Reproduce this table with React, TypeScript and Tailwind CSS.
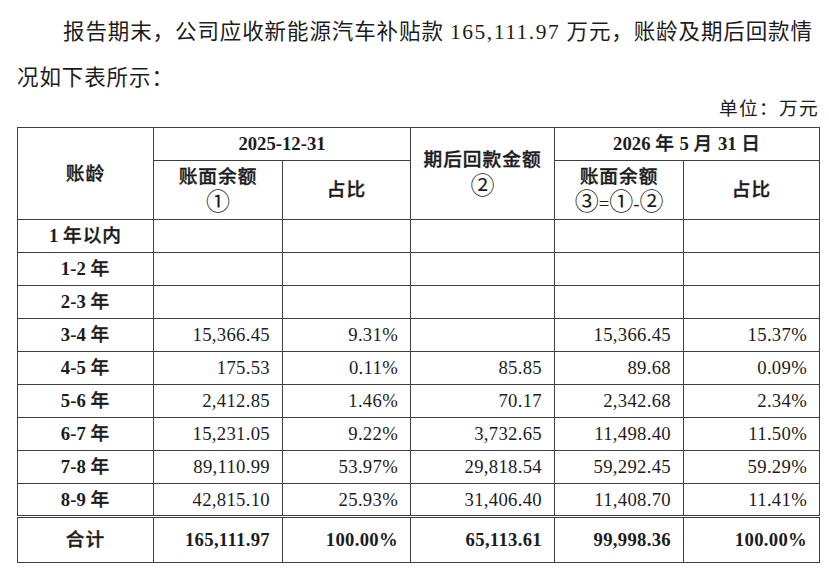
const cjk = "font-medium tracking-[1px] [-webkit-text-stroke:0.35px]";
const circ = "text-[24px] leading-none font-normal";

type Row = {
  from: string;
  unit: string;
  book: string;
  pct: string;
  back: string;
  left: string;
  leftPct: string;
};

const rows: Row[] = [
  { from: "1", unit: "年以内", book: "", pct: "", back: "", left: "", leftPct: "" },
  { from: "1-2", unit: "年", book: "", pct: "", back: "", left: "", leftPct: "" },
  { from: "2-3", unit: "年", book: "", pct: "", back: "", left: "", leftPct: "" },
  { from: "3-4", unit: "年", book: "15,366.45", pct: "9.31%", back: "", left: "15,366.45", leftPct: "15.37%" },
  { from: "4-5", unit: "年", book: "175.53", pct: "0.11%", back: "85.85", left: "89.68", leftPct: "0.09%" },
  { from: "5-6", unit: "年", book: "2,412.85", pct: "1.46%", back: "70.17", left: "2,342.68", leftPct: "2.34%" },
  { from: "6-7", unit: "年", book: "15,231.05", pct: "9.22%", back: "3,732.65", left: "11,498.40", leftPct: "11.50%" },
  { from: "7-8", unit: "年", book: "89,110.99", pct: "53.97%", back: "29,818.54", left: "59,292.45", leftPct: "59.29%" },
  { from: "8-9", unit: "年", book: "42,815.10", pct: "25.93%", back: "31,406.40", left: "11,408.70", leftPct: "11.41%" },
];

const cell = "border border-[#404040] p-0";
const num = "border border-[#404040] p-0 pr-[12px] text-right tracking-[0.3px]";
const dbl = "border-t-[3px] [border-top-style:double]";

export default function App() {
  return (
    <div className="w-[829px] h-[570px] overflow-hidden bg-white text-[#1c1c1c] font-['Liberation_Serif','Noto_Sans_CJK_SC',serif]">
      <div className="pl-[17px] pt-[9px]">
        {/* intro paragraph */}
        <p className="pl-[46px] whitespace-nowrap text-[21.5px] leading-[46px] tracking-[0.9px]">
          报告期末，公司应收新能源汽车补贴款 <span className="tracking-[1.5px]">165,111.97</span> 万元，账龄及期后回款情
        </p>
        <p className="whitespace-nowrap text-[21.5px] leading-[46px] tracking-[0.9px]">况如下表所示：</p>
        <div className="w-[802px] text-right text-[18.7px] leading-[16px] tracking-[1.3px]">单位：万元</div>

        <table className="mt-[10px] w-[802px] table-fixed border-collapse text-[18.7px] leading-[22px]">
          <colgroup>
            <col className="w-[136px]" />
            <col className="w-[129px]" />
            <col className="w-[128px]" />
            <col className="w-[144px]" />
            <col className="w-[129px]" />
            <col className="w-[136px]" />
          </colgroup>
          <thead>
            <tr className="h-[33px]">
              <th rowSpan={2} className={`${cell} text-center`}>
                <span className={cjk}>账龄</span>
              </th>
              <th colSpan={2} className={`${cell} text-center font-bold`}>
                2025-12-31
              </th>
              <th rowSpan={2} className={`${cell} text-center`}>
                <div className={`${cjk} leading-[28px]`}>期后回款金额</div>
                <div className="leading-[28px]">
                  <span className={circ}>②</span>
                </div>
              </th>
              <th colSpan={2} className={`${cell} text-center font-bold`}>
                2026 <span className={cjk}>年</span> 5 <span className={cjk}>月</span> 31 <span className={cjk}>日</span>
              </th>
            </tr>
            <tr className="h-[59px]">
              <th className={`${cell} text-center`}>
                <div className={`${cjk} leading-[26px]`}>账面余额</div>
                <div className="leading-[26px]">
                  <span className={circ}>①</span>
                </div>
              </th>
              <th className={`${cell} text-center`}>
                <span className={cjk}>占比</span>
              </th>
              <th className={`${cell} text-center`}>
                <div className={`${cjk} leading-[27px]`}>账面余额</div>
                <div className="leading-[27px] font-normal">
                  <span className={circ}>③</span>=<span className={circ}>①</span>-<span className={circ}>②</span>
                </div>
              </th>
              <th className={`${cell} text-center`}>
                <span className={cjk}>占比</span>
              </th>
            </tr>
          </thead>
          <tbody>
            {rows.map((r) => (
              <tr key={r.from} className="h-[33px]">
                <td className={`${cell} text-center`}>
                  <span className="font-bold">{r.from}</span> <span className={cjk}>{r.unit}</span>
                </td>
                <td className={num}>{r.book}</td>
                <td className={num}>{r.pct}</td>
                <td className={num}>{r.back}</td>
                <td className={num}>{r.left}</td>
                <td className={`${num} pr-[11px]`}>{r.leftPct}</td>
              </tr>
            ))}
            <tr className="h-[46px] font-bold">
              <td className={`${cell} ${dbl} text-center`}>
                <span className={cjk}>合计</span>
              </td>
              <td className={`${num} ${dbl}`}>165,111.97</td>
              <td className={`${num} ${dbl}`}>100.00%</td>
              <td className={`${num} ${dbl}`}>65,113.61</td>
              <td className={`${num} ${dbl}`}>99,998.36</td>
              <td className={`${num} ${dbl} pr-[11px]`}>100.00%</td>
            </tr>
          </tbody>
        </table>
      </div>
    </div>
  );
}
